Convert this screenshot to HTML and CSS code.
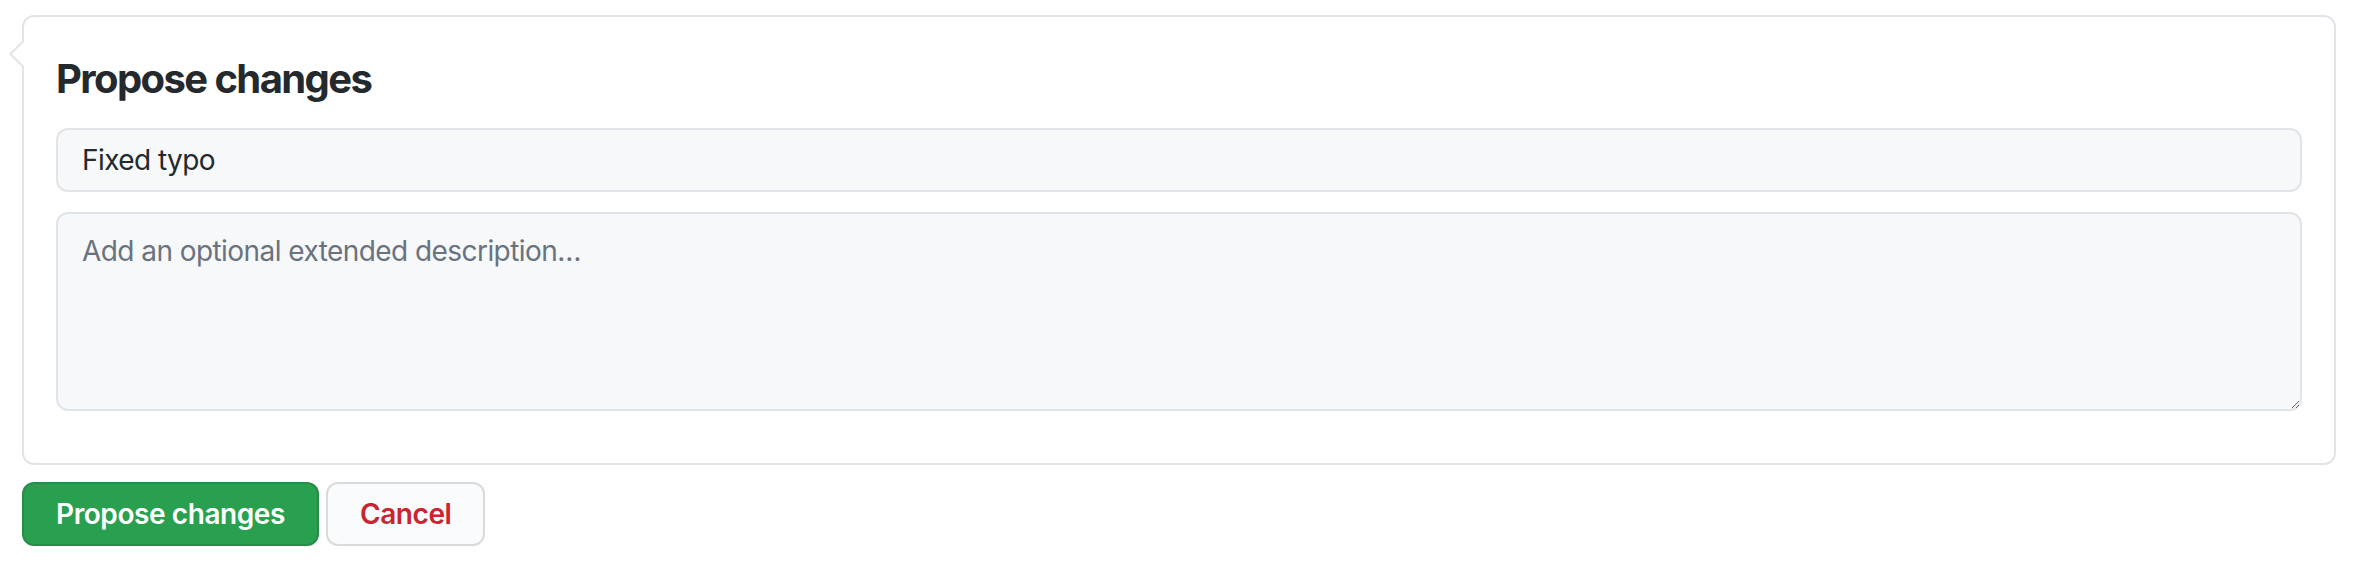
FILE: index.html
```html
<!DOCTYPE html>
<html lang="en">
<head>
<meta charset="utf-8">
<title>Propose changes</title>
<link rel="stylesheet" href="styles.css">
</head>
<body class="page">
  <form class="propose-form">
    <div class="comment-box">
      <h2 class="comment-title">Propose changes</h2>
      <input class="form-input" type="text" value="Fixed typo">
      <textarea class="form-textarea" placeholder="Add an optional extended description…"></textarea>
    </div>
    <div class="form-actions">
      <button type="button" class="btn btn-primary">Propose changes</button>
      <button type="button" class="btn btn-cancel">Cancel</button>
    </div>
  </form>
</body>
</html>
```
FILE: styles.css
```css
* { box-sizing: border-box; }

html, body { margin: 0; background: #ffffff; }

.page {
  font-family: Inter, "Noto Sans", "Liberation Sans", sans-serif;
  color: #24292e;
  padding: 15px 20px 0 22px;
}

.propose-form { display: flex; flex-direction: column; }

.comment-box {
  position: relative;
  background: #ffffff;
  border: 2px solid #e1e4e8;
  border-radius: 12px;
  padding: 32px 32px 32px 32px;
  display: flex;
  flex-direction: column;
}

.comment-box::before,
.comment-box::after {
  content: "";
  position: absolute;
  width: 0;
  height: 0;
  border-style: solid;
  border-color: transparent;
}
.comment-box::before {
  left: -15px;
  top: 22px;
  border-width: 15px 15px 15px 0;
  border-right-color: #e1e4e8;
}
.comment-box::after {
  left: -12px;
  top: 24px;
  border-width: 13px 13px 13px 0;
  border-right-color: #ffffff;
}

.comment-title {
  margin: 0 0 19px 0;
  font-size: 40px;
  line-height: 60px;
  font-weight: 700;
  letter-spacing: -0.04em;
  color: #24292e;
}

.form-input,
.form-textarea {
  width: 100%;
  font-family: inherit;
  font-size: 28px;
  letter-spacing: -0.02em;
  color: #24292e;
  background: #f6f8fa;
  border: 2px solid #e1e4e8;
  border-radius: 12px;
  outline: none;
}

.form-input {
  height: 64px;
  padding: 0 24px;
}

.form-textarea {
  margin: 20px 0 20px 0;
  height: 199px;
  padding: 16px 24px;
  line-height: 1.5;
  resize: vertical;
}
.form-textarea::placeholder { color: #6a737d; opacity: 1; }

.form-actions {
  display: flex;
  gap: 7px;
  margin-top: 17px;
}

.btn {
  height: 64px;
  padding: 0 32px;
  border-radius: 12px;
  border: 2px solid rgba(27, 31, 35, 0.15);
  font-family: inherit;
  font-size: 28px;
  font-weight: 600;
  letter-spacing: -0.015em;
  line-height: 1;
  cursor: pointer;
}

.btn-primary {
  background: #28a050;
  color: #ffffff;
}

.btn-cancel {
  background: #fafbfc;
  color: #cb2431;
}
```
